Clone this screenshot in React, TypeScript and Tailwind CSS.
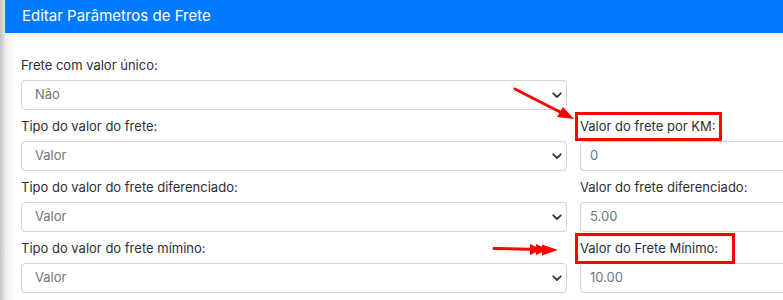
import React from "react";

const Chevron = () => (
  <svg width="10" height="7" viewBox="0 0 10 7" className="shrink-0">
    <path d="M1.2 1.3 L5 5 L8.8 1.3" fill="none" stroke="#343a40" strokeWidth="1.8" strokeLinecap="round" strokeLinejoin="round" />
  </svg>
);

const Label = ({ children }: { children?: React.ReactNode }) => (
  <div className="h-[20px] mb-[4px] flex items-center text-[13px] text-[#2b2f33] whitespace-nowrap">{children}</div>
);

const Select = ({ value }: { value: string }) => (
  <div className="h-[30px] border border-[#ced4da] rounded-[4px] flex items-center justify-between pl-[13px] pr-[4px] text-[13px] text-[#6c757d] bg-white">
    <span>{value}</span>
    <Chevron />
  </div>
);

const Input = ({ value }: { value: string }) => (
  <div className="h-[30px] border border-[#ced4da] rounded-[4px] flex items-center pl-[9px] text-[13px] text-[#6c757d] bg-white">
    {value}
  </div>
);

const Row = ({ children }: { children: React.ReactNode }) => (
  <div className="grid grid-cols-[546px_546px] gap-x-[13px] mb-[7px]">{children}</div>
);

export default function App() {
  return (
    <div
      className="w-[783px] h-[300px] overflow-hidden relative bg-white flex"
      style={{ fontFamily: "Inter, 'Open Sans', sans-serif" }}
    >
      <div className="w-[5px] h-full bg-gradient-to-r from-[#c4c4c4] to-[#e6e6e6] shrink-0" />
      <div className="flex-1 flex flex-col min-w-0">
        <div className="h-[33px] bg-[#007bff] flex items-center pl-[17px] text-white text-[15px] shrink-0">
          Editar Parâmetros de Frete
        </div>
        <div className="flex-1 pt-[23px] pl-[16px] shadow-[inset_10px_0_12px_-8px_rgba(0,0,0,0.10)]">
          <Row>
            <div>
              <Label>Frete com valor único:</Label>
              <Select value="Não" />
            </div>
            <div />
          </Row>
          <Row>
            <div>
              <Label>Tipo do valor do frete:</Label>
              <Select value="Valor" />
            </div>
            <div>
              <Label>Valor do frete por KM:</Label>
              <Input value="0" />
            </div>
          </Row>
          <Row>
            <div>
              <Label>Tipo do valor do frete diferenciado:</Label>
              <Select value="Valor" />
            </div>
            <div>
              <Label>Valor do frete diferenciado:</Label>
              <Input value="5.00" />
            </div>
          </Row>
          <Row>
            <div>
              <Label>Tipo do valor do frete mímino:</Label>
              <Select value="Valor" />
            </div>
            <div>
              <Label>Valor do Frete Mínimo:</Label>
              <Input value="10.00" />
            </div>
          </Row>
        </div>
      </div>

      <div className="absolute left-[575px] top-[112px] w-[147px] h-[29px] border-[3px] border-[#ff0000]" />
      <div className="absolute left-[575px] top-[233px] w-[160px] h-[31px] border-[3px] border-[#ff0000]" />

      <svg className="absolute left-0 top-0 pointer-events-none" width="783" height="300" viewBox="0 0 783 300">
        <line x1="515" y1="89" x2="562" y2="113" stroke="#ff0000" strokeWidth="3" strokeLinecap="round" />
        <polygon points="574,119 557,117 563,107" fill="#ff0000" />
        <line x1="494" y1="248.5" x2="540" y2="249.5" stroke="#ff0000" strokeWidth="3" strokeLinecap="round" />
        <polygon points="530,244 542,249.5 530,255" fill="#ff0000" />
        <polygon points="536,244 548,249.5 536,255" fill="#ff0000" />
        <polygon points="542,244.5 558,250 542,255.5" fill="#ff0000" />
      </svg>
    </div>
  );
}
